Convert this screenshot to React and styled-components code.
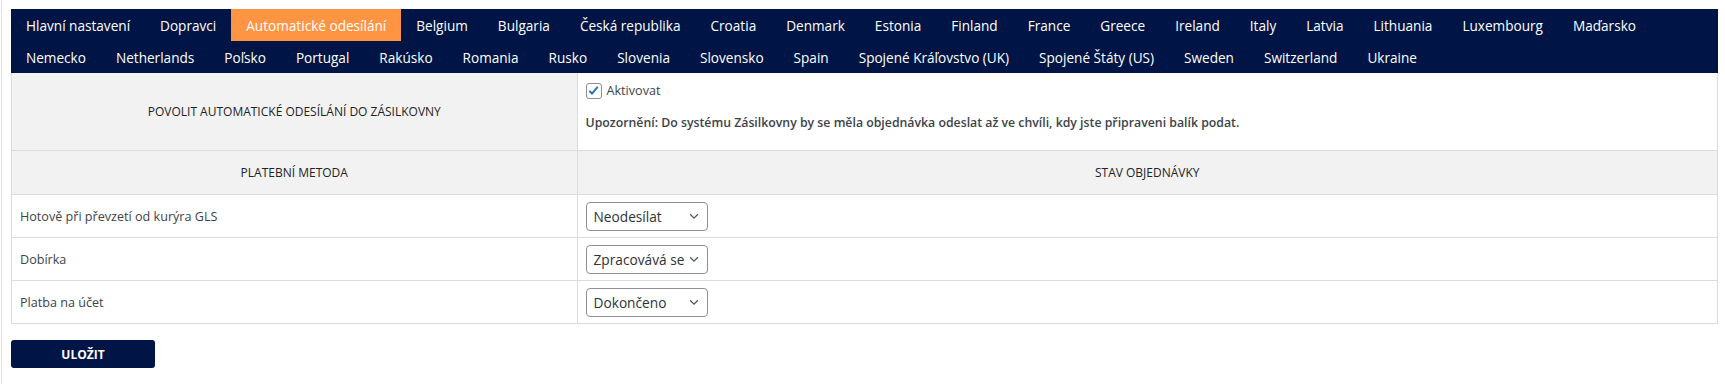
import React from 'react';
import styled, { createGlobalStyle } from 'styled-components';

const GlobalStyle = createGlobalStyle`
  body {
    margin: 0;
    background: #fff;
    font-family: "Open Sans", "Noto Sans", sans-serif;
    color: #3c434a;
  }
`

const Frame = styled.div`
  margin-left: 1px;
  border-left: 1px solid #e2e2e2;
  padding: 9px 7px 17px 9px;
  min-height: 358px;
`

const Nav = styled.nav`
  background: #001545;
`

const NavRow = styled.ul`
  display: flex;
  margin: 0;
  padding: 0;
  list-style: none;
  height: 32px;
`

const Tab = styled.li`
  display: flex;
  align-items: center;
  padding: 0 15px;
  font-size: 13.6px;
  color: #fff;
  white-space: nowrap;
  background: ${p => (p.$active ? '#ff9443' : 'transparent')};
`

const Table = styled.table`
  width: 100%;
  border-collapse: collapse;
  font-size: 12.6px;
  border: 1px solid #dcdcde;
  border-top: 0;
`

const Th = styled.th`
  background: #f2f2f2;
  border: 1px solid #dcdcde;
  border-top: ${p => (p.$first ? '0' : '1px solid #dcdcde')};
  font-weight: 400;
  font-size: 12px;
  text-transform: uppercase;
  color: #1d2327;
  text-align: center;
  padding: 0 8px;
  height: ${p => p.$h || 43}px;
  width: ${p => p.$w || 'auto'};
`

const Td = styled.td`
  border: 1px solid #dcdcde;
  border-top: ${p => (p.$first ? '0' : '1px solid #dcdcde')};
  padding: ${p => p.$pad || '6px 8px'};
  vertical-align: ${p => p.$valign || 'middle'};
  height: ${p => p.$h || 30}px;
`

const CheckLabel = styled.label`
  display: flex;
  align-items: center;
  gap: 5px;
  font-size: 12.6px;
  color: #3c434a;
`

const CheckBox = styled.span`
  width: 14px;
  height: 14px;
  border: 1px solid #8c8f94;
  border-radius: 3px;
  display: flex;
  align-items: center;
  justify-content: center;
  background: #fff;
`

const Notice = styled.p`
  margin: 15px 0 0;
  font-weight: 600;
  font-size: 12.3px;
  color: #3c434a;
`

const SelectBox = styled.div`
  width: 122px;
  height: 29px;
  border: 1px solid #8c8f94;
  border-radius: 4px;
  display: flex;
  align-items: center;
  justify-content: space-between;
  padding: 0 6px 0 7px;
  box-sizing: border-box;
  font-size: 13.7px;
  color: #2c3338;
  background: #fff;
`

const SaveButton = styled.button`
  margin-top: 16px;
  width: 144px;
  height: 28px;
  border: 0;
  border-radius: 3px;
  background: #001545;
  color: #fff;
  font-family: inherit;
  font-weight: 700;
  font-size: 12px;
  text-transform: uppercase;
`

const rowOne = [
  'Hlavní nastavení', 'Dopravci', 'Automatické odesílání', 'Belgium', 'Bulgaria',
  'Česká republika', 'Croatia', 'Denmark', 'Estonia', 'Finland', 'France',
  'Greece', 'Ireland', 'Italy', 'Latvia', 'Lithuania', 'Luxembourg', 'Maďarsko',
]

const rowTwo = [
  'Nemecko', 'Netherlands', 'Poľsko', 'Portugal', 'Rakúsko', 'Romania', 'Rusko',
  'Slovenia', 'Slovensko', 'Spain', 'Spojené Kráľovstvo (UK)', 'Spojené Štáty (US)',
  'Sweden', 'Switzerland', 'Ukraine',
]

const payments = [
  ['Hotově při převzetí od kurýra GLS', 'Neodesílat'],
  ['Dobírka', 'Zpracovává se'],
  ['Platba na účet', 'Dokončeno'],
]

const Chevron = () => (
  <svg width="14" height="14" viewBox="0 0 20 20">
    <path d="M4.5 7.5l5.5 5.5 5.5-5.5" fill="none" stroke="#50575e" strokeWidth="1.8" />
  </svg>
)

export default function App() {
  return (
    <>
      <GlobalStyle />
      <Frame>
        <Nav>
          <NavRow>
            {rowOne.map(t => (
              <Tab key={t} $active={t === 'Automatické odesílání'}>{t}</Tab>
            ))}
          </NavRow>
          <NavRow>
            {rowTwo.map(t => <Tab key={t}>{t}</Tab>)}
          </NavRow>
        </Nav>
        <Table>
          <tbody>
            <tr>
              <Th $first $w="33.15%" $h={77}>Povolit automatické odesílání do Zásilkovny</Th>
              <Td $first $valign="top" $pad="9px 8px 8px">
                <CheckLabel>
                  <CheckBox>
                    <svg width="13" height="13" viewBox="0 0 20 20">
                      <path d="M3.5 10.5l4.2 4.2L16.5 4.5" fill="none" stroke="#2271b1" strokeWidth="3" />
                    </svg>
                  </CheckBox>
                  Aktivovat
                </CheckLabel>
                <Notice>Upozornění: Do systému Zásilkovny by se měla objednávka odeslat až ve chvíli, kdy jste připraveni balík podat.</Notice>
              </Td>
            </tr>
            <tr>
              <Th>Platební metoda</Th>
              <Th>Stav objednávky</Th>
            </tr>
            {payments.map(([label, status]) => (
              <tr key={label}>
                <Td>{label}</Td>
                <Td>
                  <SelectBox>
                    <span>{status}</span>
                    <Chevron />
                  </SelectBox>
                </Td>
              </tr>
            ))}
          </tbody>
        </Table>
        <SaveButton type="button">Uložit</SaveButton>
      </Frame>
    </>
  )
}
